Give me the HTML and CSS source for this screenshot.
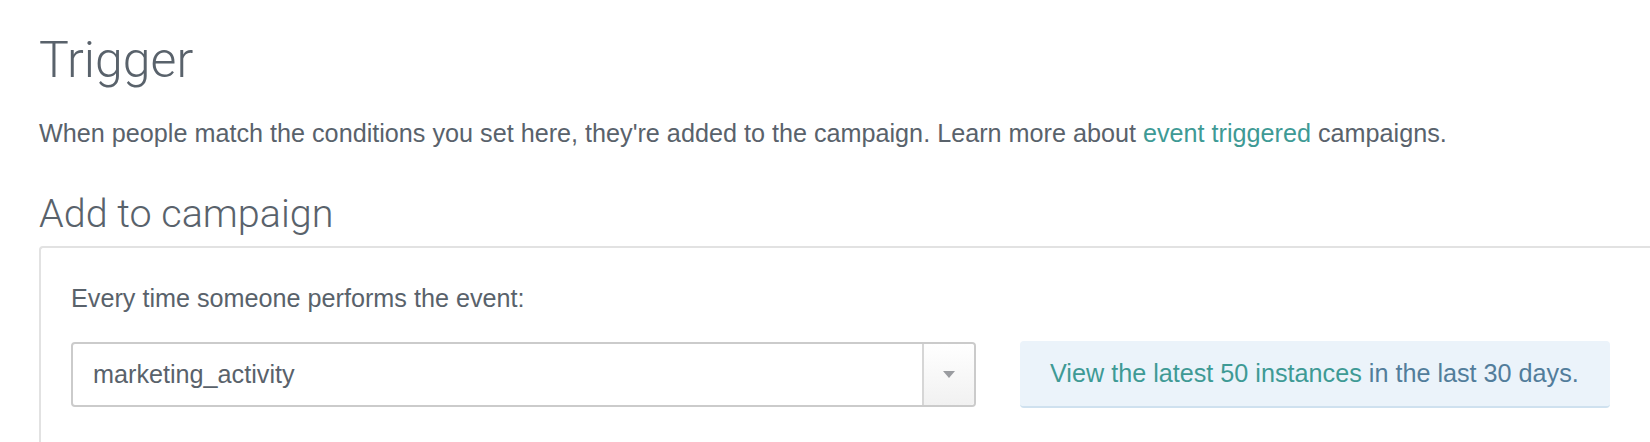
FILE: index.html
```html
<!DOCTYPE html>
<html lang="en">
<head>
    <meta charset="UTF-8">
    <meta name="viewport" content="width=device-width, initial-scale=1.0">
    <title>Trigger</title>
    <link rel="stylesheet" href="styles.css">
</head>
<body>
    <div class="page">
        <h1>Trigger</h1>
        <p class="intro">When people match the conditions you set here, they're added to the campaign. Learn more about <a href="#">event triggered</a> campaigns.</p>

        <h2>Add to campaign</h2>
        <div class="panel">
            <label class="field-label">Every time someone performs the event:</label>
            <div class="event-row">
                <div class="select">
                    <span class="select-value">marketing_activity</span>
                    <span class="select-toggle"><span class="caret"></span></span>
                </div>
                <div class="instances">
                    <span><a href="#">View the latest 50 instances</a> in the last 30 days.</span>
                </div>
            </div>
        </div>
    </div>
</body>
</html>
```

FILE: styles.css
```css
body {
    margin: 0;
    font-family: "Liberation Sans", Arial, sans-serif;
    font-size: 25.2px;
    color: #59626b;
    background-color: white;
    overflow: hidden;
}

a {
    color: #3e9a95;
    text-decoration: none;
}

.page {
    padding: 30px 0 0 39px;
}

h1 {
    font-family: Roboto, "Liberation Sans", sans-serif;
    font-weight: 300;
    font-size: 50px;
    line-height: 60px;
    margin: 0 0 28px 0;
}

.intro {
    margin: 0 0 44px 0;
    line-height: 30px;
}

h2 {
    font-family: Roboto, "Liberation Sans", sans-serif;
    font-weight: 300;
    font-size: 39.5px;
    line-height: 44px;
    margin: 0 0 10px 0;
}

.panel {
    border: 2px solid #e2e2e2;
    border-right: none;
    border-bottom: none;
    border-top-left-radius: 4px;
    padding: 35px 0 40px 30px;
}

.field-label {
    display: block;
    line-height: 30px;
    margin-bottom: 28px;
}

.event-row {
    display: flex;
    align-items: center;
    gap: 44px;
}

.select {
    display: flex;
    width: 901px;
    height: 61px;
    border: 2px solid #cbcbcb;
    border-radius: 4px;
    background-color: white;
}

.select-value {
    flex: 1;
    display: flex;
    align-items: center;
    padding-left: 20px;
}

.select-toggle {
    width: 50px;
    display: flex;
    align-items: center;
    justify-content: center;
    border-left: 2px solid #d6d6d6;
    background: linear-gradient(#ffffff, #f1f1f1);
    border-radius: 0 3px 3px 0;
}

.caret {
    width: 0;
    height: 0;
    border-left: 6px solid transparent;
    border-right: 6px solid transparent;
    border-top: 7px solid #9a9ca0;
}

.instances {
    width: 590px;
    height: 67px;
    box-sizing: border-box;
    padding: 0 30px;
    display: flex;
    align-items: center;
    background-color: #ebf3fa;
    border-bottom: 2px solid #cfe1ef;
    border-radius: 4px;
    color: #527d9b;
    white-space: nowrap;
}
```
